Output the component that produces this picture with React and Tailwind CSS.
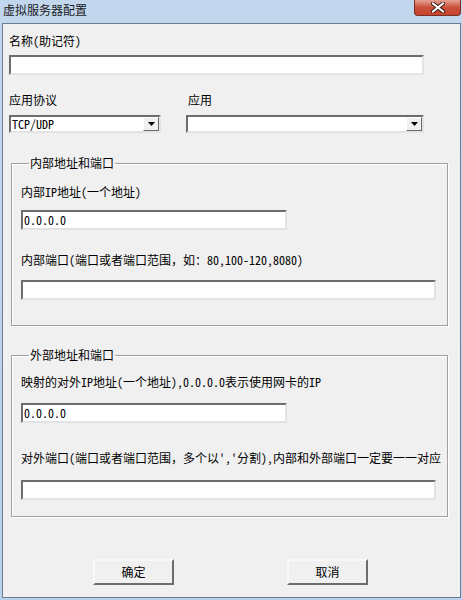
import React from 'react';

const sunken =
  'bg-white border-2 border-t-[#6d6d6d] border-l-[#6d6d6d] border-b-[#e3e3e3] border-r-[#e3e3e3]';

function TextBox({ width, value }) {
  return (
    <div className={`${sunken} h-[20px] ${width} flex items-center pl-[1px] leading-[14px]`}>
      {value}
    </div>
  );
}

function ComboBox({ width, value }) {
  return (
    <div className={`${sunken} h-[18px] ${width} flex items-center justify-between`}>
      <span className="pl-[1px] leading-[14px]">{value}</span>
      <div className="w-[16px] h-[14px] bg-[#f0f0f0] border border-t-white border-l-white border-b-[#696969] border-r-[#696969] flex items-center justify-center">
        <svg width="7" height="4" viewBox="0 0 7 4">
          <path d="M0 0h7L3.5 4z" fill="#000" />
        </svg>
      </div>
    </div>
  );
}

function Group({ title, className, children }) {
  return (
    <fieldset
      className={`ml-[8px] w-[437px] border border-[#a0a0a0] shadow-[inset_1px_1px_0_#fff,1px_1px_0_#fff] pl-[9px] ${className}`}
    >
      <legend className="ml-[8px] px-[1px] leading-[14px]">{title}</legend>
      {children}
    </fieldset>
  );
}

function Button({ label }) {
  return (
    <div className="w-[81px] h-[26px] bg-[#f0f0f0] border-2 border-t-[#f8f8f8] border-l-[#f8f8f8] border-b-[#6d6d6d] border-r-[#6d6d6d] flex items-center justify-center leading-[14px]">
      {label}
    </div>
  );
}

export default function App() {
  return (
    <div className="w-[462px] h-[600px] bg-gradient-to-b from-[#c2d7ee] to-[#b9d1ea] flex flex-col text-[12px] text-black font-['Noto_Sans_Mono_CJK_SC','Noto_Sans_CJK_SC',sans-serif]">
      {/* title bar */}
      <div className="h-[23px] flex items-start justify-between">
        <span className="pl-[3px] pt-[3px] leading-[14px] text-[#1a1a1a]">虚拟服务器配置</span>
        <div className="mr-[1px] w-[47px] h-[16px] rounded-b-[4px] border border-t-0 border-[#7a2e24] bg-gradient-to-b from-[#e6a193] via-[#c9503b] to-[#c7432d] flex items-center justify-center">
          <svg width="14" height="11" viewBox="0 0 14 11">
            <path d="M2 1.5l10 8M12 1.5l-10 8" stroke="#3a1a16" strokeWidth="4" strokeLinecap="square" />
            <path d="M2 1.5l10 8M12 1.5l-10 8" stroke="#fff" strokeWidth="2" strokeLinecap="square" />
          </svg>
        </div>
      </div>

      {/* client area */}
      <div className="flex-1 ml-[2px] mr-[1px] mb-[2px] border border-[#6b7d92] bg-[#f0f0f0] flex flex-col">
        <div className="pl-[6px] mt-[10px] leading-[14px]">名称(助记符)</div>
        <div className="pl-[6px] mt-[7px]">
          <TextBox width="w-[415px]" value="" />
        </div>

        <div className="flex pl-[6px] mt-[18px] leading-[14px]">
          <span className="w-[179px]">应用协议</span>
          <span>应用</span>
        </div>
        <div className="flex pl-[6px] mt-[8px] gap-[25px]">
          <ComboBox width="w-[152px]" value="TCP/UDP" />
          <ComboBox width="w-[238px]" value="" />
        </div>

        <Group title="内部地址和端口" className="mt-[23px] pb-[25px]">
          <div className="mt-[15px] leading-[14px]">内部IP地址(一个地址)</div>
          <div className="mt-[11px]">
            <TextBox width="w-[266px]" value="0.0.0.0" />
          </div>
          <div className="mt-[23px] leading-[14px]">内部端口(端口或者端口范围，如：80,100-120,8080)</div>
          <div className="mt-[13px]">
            <TextBox width="w-[415px]" value="" />
          </div>
        </Group>

        <Group title="外部地址和端口" className="mt-[22px] pb-[16px]">
          <div className="mt-[13px] leading-[14px]">映射的对外IP地址(一个地址),0.0.0.0表示使用网卡的IP</div>
          <div className="mt-[14px]">
            <TextBox width="w-[266px]" value="0.0.0.0" />
          </div>
          <div className="mt-[28px] leading-[14px] whitespace-nowrap">
            对外端口(端口或者端口范围，多个以','分割),内部和外部端口一定要一一对应
          </div>
          <div className="mt-[15px]">
            <TextBox width="w-[415px]" value="" />
          </div>
        </Group>

        <div className="flex mt-[42px] pl-[90px] gap-[113px]">
          <Button label="确定" />
          <Button label="取消" />
        </div>
      </div>
    </div>
  );
}
